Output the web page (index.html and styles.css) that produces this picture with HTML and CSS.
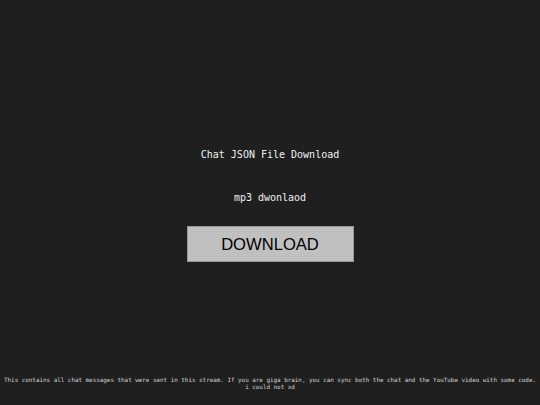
FILE: index.html
```html
<!DOCTYPE html>
<html>
<head>
<meta charset="utf-8">
<link rel="stylesheet" href="styles.css">
</head>
<body>
<div class="page">
  <main class="main">
    <div class="title">Chat JSON File Download</div>
    <div class="sub">mp3 dwonlaod</div>
    <button class="btn">DOWNLOAD</button>
  </main>
  <footer class="footer">This contains all chat messages that were sent in this stream. If you are giga brain, you can sync both the chat and the YouTube video with some code. i could not xd</footer>
</div>
</body>
</html>
```

FILE: styles.css
```css
html, body {
  margin: 0;
  padding: 0;
  background: #1f1f1f;
}
.page {
  height: 405px;
  display: flex;
  flex-direction: column;
  font-family: "DejaVu Sans Mono", monospace;
  color: #f0f0f0;
}
.main {
  flex: 1;
  display: flex;
  flex-direction: column;
  align-items: center;
  padding-top: 148px;
}
.title {
  font-size: 10px;
  line-height: 14px;
}
.sub {
  font-size: 10px;
  line-height: 14px;
  margin-top: 29px;
}
.btn {
  margin-top: 21px;
  width: 167px;
  height: 36px;
  background: #c0c0c0;
  border: 1px solid #9a9a9a;
  color: #000000;
  font-family: "Liberation Sans", Arial, sans-serif;
  font-size: 16.6px;
  padding: 2px 0 0;
}
.footer {
  font-size: 5.9px;
  line-height: 7px;
  color: #d0d0d0;
  text-align: center;
  padding: 0 4px 14px;
}
```
